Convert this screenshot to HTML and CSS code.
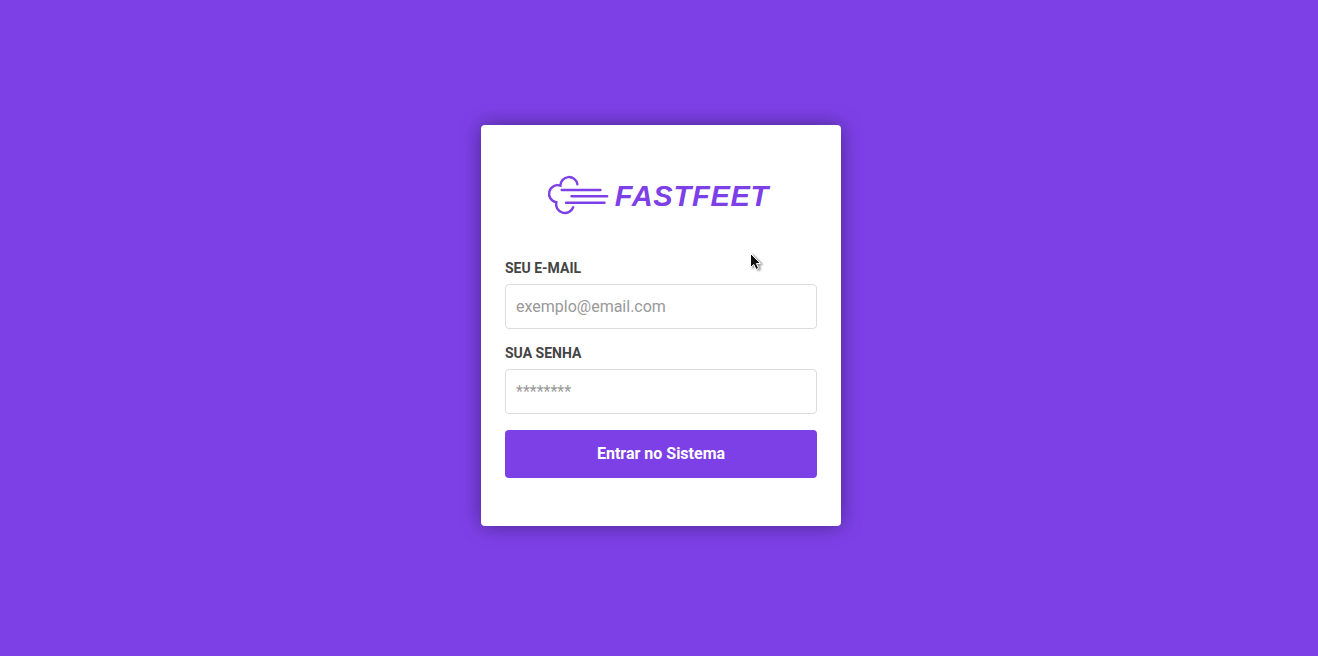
FILE: index.html
```html
<!DOCTYPE html>
<html lang="pt-BR">
<head>
<meta charset="utf-8">
<title>FastFeet</title>
<link rel="stylesheet" href="styles.css">
</head>
<body>
<main class="card">
  <svg class="logo" width="226" height="44" viewBox="546 173 226 44" role="img" aria-label="FastFeet">
    <g class="logo-lines">
      <path d="M577.4 184.2A8.56 8.56 0 0 0 560.4 185.6A8.58 8.58 0 1 0 556.3 202.2A8.85 8.85 0 0 0 573.2 207.3"/>
      <path d="M561.7 190H600.5M571.5 196.3H607.2M566 202.7H604.5"/>
    </g>
    <text class="logo-text" x="614.8" y="206">FASTFEET</text>
  </svg>
  <form class="form">
    <label class="label" for="email">SEU E-MAIL</label>
    <input class="input" id="email" type="email" placeholder="exemplo@email.com">
    <label class="label" for="password">SUA SENHA</label>
    <input class="input" id="password" type="password" placeholder="********">
    <button class="button" type="button">Entrar no Sistema</button>
  </form>
  <svg class="cursor" width="18" height="24" viewBox="0 0 18 24" aria-hidden="true">
    <path d="M1.5 1.5V15.5L4.8 12.5L7 17.5L9.6 16.3L7.4 11.5H11.5Z"/>
  </svg>
</main>
</body>
</html>
```
FILE: styles.css
```css
* { box-sizing: border-box; }
body {
  margin: 0;
  height: 656px;
  background: #7d40e7;
  font-family: Roboto, sans-serif;
  padding: 125px 0 0 4px;
  display: flex;
  justify-content: center;
  align-items: flex-start;
}
.card {
  position: relative;
  width: 360px;
  height: 401px;
  padding: 48px 24px;
  background: #fff;
  border-radius: 4px;
  box-shadow: 0 0 20px rgba(0, 0, 0, 0.4);
}
.logo { display: block; margin: 0 auto 43px 41px; }
.logo-lines { fill: none; stroke: #7d40e7; stroke-width: 2.4; stroke-linecap: round; stroke-linejoin: miter; }
.logo-text { fill: #7d40e7; font: italic bold 29px "Liberation Sans", Arial, sans-serif; letter-spacing: 0.75px; }
.form { display: flex; flex-direction: column; }
.label { font-size: 14px; font-weight: bold; line-height: 17px; color: #444; margin-bottom: 7px; }
.input {
  height: 45px;
  padding: 0 10px;
  margin: 0 0 16px;
  border: 1px solid #ddd;
  border-radius: 4px;
  font: 16px Roboto, sans-serif;
}
.input::placeholder { color: #999; }
.button {
  height: 48px;
  padding: 0 6px 2px;
  border: 0;
  border-radius: 4px;
  background: #7d40e7;
  color: #fff;
  font: bold 16px Roboto, sans-serif;
}
.cursor { position: absolute; left: 268px; top: 127px; fill: #111; stroke: #fff; filter: drop-shadow(2px 1px 1px rgba(0, 0, 0, 0.45)); }
```
